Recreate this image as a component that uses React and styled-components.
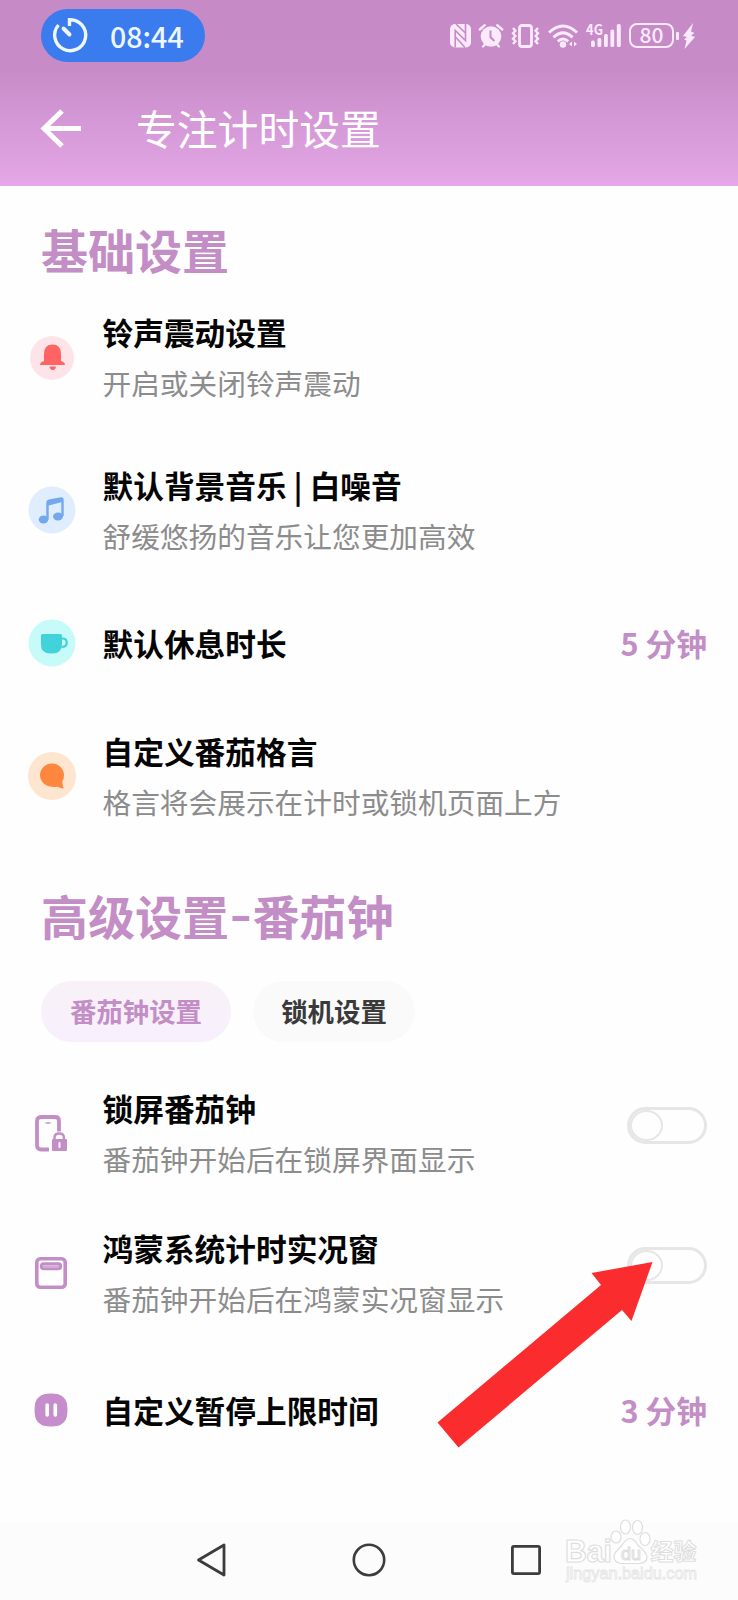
import React from 'react';
import styled, { createGlobalStyle } from 'styled-components';

const GlobalStyle = createGlobalStyle`
  * {
    box-sizing: border-box;
  }

  body {
    margin: 0;
    background: #fefefe;
    font-family: 'Noto Sans CJK SC', sans-serif;
  }

  svg {
    display: block;
    flex-shrink: 0;
    overflow: visible;
  }
`;

const Screen = styled.div`
  position: relative;
  display: flex;
  flex-direction: column;
  width: 738px;
  height: 1600px;
  overflow: hidden;
  background: #fefefe;
`;

const Header = styled.header`
  height: 186px;
  background: linear-gradient(#c68ac7 0, #c78bc8 68px, #d498d6 120px, #e4a7e7 186px);
  color: #fff;
`;

const StatusBar = styled.div`
  display: flex;
  align-items: center;
  justify-content: space-between;
  height: 71px;
  padding: 0 43px 0 41px;
`;

const TimerPill = styled.div`
  display: flex;
  align-items: center;
  gap: 22px;
  width: 164px;
  height: 53px;
  padding: 0 0 1px 11px;
  border-radius: 27px;
  background: #3a7bee;
  color: #eef6ff;
  font-size: 28.6px;
  font-weight: 500;
  line-height: 49px;
`;

const StatusIcons = styled.div`
  display: flex;
  align-items: center;
  gap: 8px;
  color: #fbeafc;
`;

const Battery = styled.div`
  display: flex;
  align-items: center;
  gap: 2px;
  width: 50px;

  &::after {
    content: '';
    width: 3px;
    height: 8px;
    border-radius: 1px;
    background: currentColor;
  }
`;

const BatteryLevel = styled.div`
  width: 45px;
  height: 25px;
  border: 2px solid currentColor;
  border-radius: 8px;
  font-size: 21px;
  font-weight: 500;
  line-height: 19px;
  text-align: center;
`;

const Bolt = styled.svg`
  margin-left: -4px;
`;

const TitleBar = styled.div`
  display: flex;
  align-items: center;
  gap: 54px;
  height: 115px;
  padding-left: 40px;
`;

const PageTitle = styled.h1`
  margin: 0;
  padding-bottom: 1px;
  font-size: 40.8px;
  font-weight: 400;
  line-height: 112px;
`;

const Content = styled.main`
  flex: 1;
`;

const SectionTitle = styled.h2`
  margin: ${({ $margin }) => $margin};
  font-size: 47px;
  font-weight: 700;
  line-height: 60px;
  color: #c38dc6;
`;

const Dash = styled.span`
  display: inline-block;
  padding: 0 3px;
  transform: translateY(-3px) scaleX(1.3);
`;

const List = styled.div`
  display: flex;
  flex-direction: column;
  gap: ${({ $gap }) => $gap}px;
`;

const Row = styled.div`
  display: flex;
  align-items: center;
  height: ${({ $height }) => $height || 101}px;
  padding-right: 31px;
`;

const IconSlot = styled.div`
  display: flex;
  justify-content: center;
  width: 102.5px;
  padding-left: ${({ $outline }) => ($outline ? 0 : 1)}px;
`;

const RowText = styled.div`
  flex: 1;
`;

const RowTitle = styled.div`
  font-size: 30.7px;
  font-weight: 700;
  line-height: 50px;
  color: #050505;
`;

const RowHint = styled.div`
  font-size: 28.7px;
  font-weight: 400;
  line-height: 51px;
  color: #8c8c8c;
`;

const RowValue = styled.div`
  font-size: 30.7px;
  font-weight: 700;
  line-height: 50px;
  color: #c38dc6;
`;

const Toggle = styled.div`
  display: flex;
  align-items: center;
  width: 80px;
  height: 37px;
  margin-bottom: 15px;
  border: 3px solid #e6e6e6;
  border-radius: 19px;
`;

const Thumb = styled.div`
  width: 33px;
  height: 31px;
  border: 2px solid #e6e6e6;
  border-radius: 50%;
`;

const Tabs = styled.div`
  display: flex;
  gap: 22px;
  margin: 36px 0 41px 41px;
`;

const Tab = styled.div`
  width: ${({ $width }) => $width}px;
  height: 61px;
  border-radius: 31px;
  background: ${({ $active }) => ($active ? 'linear-gradient(#f8f2f7, #f8effd)' : '#fafafa')};
  color: ${({ $active }) => ($active ? '#c38dc6' : '#3a3a3a')};
  font-size: 26.4px;
  font-weight: 700;
  line-height: 59px;
  text-align: center;
`;

const NavBar = styled.nav`
  display: flex;
  align-items: center;
  justify-content: space-between;
  height: 79px;
  padding: 0 196px 2px 195px;
  background: #fcfcfc;
`;

const Pointer = styled.svg`
  position: absolute;
  left: 430px;
  top: 1255px;
`;

const Watermark = styled.svg`
  position: absolute;
  left: 560px;
  top: 1515px;
`;

const TimerIcon = () => (
  <svg width="36" height="36" viewBox="0 0 36 36" fill="none" stroke="currentColor" strokeWidth="3.4">
    <path d="M17.500 9V2.700A15.500 15.500 0 1 1 6.500 8" />
    <path d="M11.500 11.500l6 6" strokeWidth="4" strokeLinecap="round" />
  </svg>
);

const NfcIcon = () => (
  <svg width="21" height="24" viewBox="0 0 21 24">
    <rect x="0" y="0" width="21" height="23.500" rx="5" fill="currentColor" />
    <path d="M5.200 23.500V6.500l10.300 10V0" fill="none" stroke="#c68ac7" strokeWidth="1.600" />
    <path d="M6 0l9.500 9M5.500 13l9.500 10.500" fill="none" stroke="#c68ac7" strokeWidth="1.600" />
  </svg>
);

const AlarmIcon = () => (
  <svg width="24" height="24" viewBox="0 0 24 24" fill="none" stroke="currentColor">
    <circle cx="12" cy="12.5" r="10.300" fill="currentColor" stroke="none" />
    <path d="M.8 5.500l5-4.300M23.200 5.500l-5-4.300M4 22.500l3-3M20 22.500l-3-3" strokeWidth="2.400" strokeLinecap="round" />
    <path d="M11.500 6.500v6.700l4 3.800" stroke="#c68ac7" strokeWidth="2" />
  </svg>
);

const VibrateIcon = () => (
  <svg width="29" height="24" viewBox="0 0 29 24" fill="none" stroke="currentColor">
    <rect x="8.5" y="1.5" width="12" height="21" rx="2.5" strokeWidth="2.8" />
    <path d="M2 4l2.4 2.7L2 9.3l2.4 2.7L2 14.7l2.4 2.6L2 20" strokeWidth="2.4" />
    <path d="M27 4l-2.4 2.7L27 9.3 24.6 12l2.4 2.7-2.4 2.6L27 20" strokeWidth="2.4" />
  </svg>
);

const WifiIcon = () => (
  <svg width="30" height="24" viewBox="0 0 30 24" fill="none" stroke="currentColor" strokeWidth="3">
    <path d="M1 8.500q14-13 28 0M5.500 13.300q9.500-9 19 0M9.800 17.300q5.200-4.600 10.400 0" />
    <circle cx="15" cy="20.500" r="3.200" fill="currentColor" stroke="none" />
    <path d="M24 17.500v5l-3-2.500zM26 17.500v5l3-2.500z" fill="currentColor" stroke="none" />
  </svg>
);

const SignalIcon = () => (
  <svg width="35" height="24" viewBox="0 0 35 24" fill="currentColor">
    <text x="0" y="11" fontSize="14.500" fontWeight="700" textLength="17" lengthAdjust="spacingAndGlyphs">4G</text>
    <rect x="5" y="16.500" width="3.800" height="6.500" rx="1.500" />
    <rect x="11.500" y="14" width="3.800" height="9" rx="1.500" />
    <rect x="18" y="10" width="3.800" height="13" rx="1.500" />
    <rect x="24.400" y="5.500" width="3.800" height="17.500" rx="1.500" />
    <rect x="30.800" y="0" width="4" height="23" rx="1.500" />
  </svg>
);

const BackArrow = () => (
  <svg width="42" height="40" viewBox="0 0 42 40" fill="none" stroke="#fff" strokeWidth="5">
    <path d="M41 19.500H5M22 2L4 19.500 22 37" />
  </svg>
);

const BellIcon = () => (
  <svg width="48" height="48" viewBox="0 0 48 48">
    <circle cx="24" cy="24" r="22" fill="#fee4e8" />
    <path d="M16 27V20q0-9.500 8.500-9.500T33 20v7q4 1 4 4H12q0-3 4-4z" fill="#ff6465" />
    <path d="M21.500 32.500H28q-.5 3.500-3.200 3.500t-3.300-3.500z" fill="#ff6465" />
  </svg>
);

const MusicIcon = () => (
  <svg width="48" height="48" viewBox="0 0 48 48">
    <circle cx="24" cy="24" r="23.500" fill="#e0edfe" />
    <path d="M19.500 33.500V16.500q0-1.500 1.500-1.800L33 12.500q1.500-.2 1.500 1.300V30" fill="none" stroke="#72a8ed" strokeWidth="2.400" />
    <path d="M20 15l14-2.500v3.500l-14 3.800z" fill="#72a8ed" />
    <ellipse cx="15.500" cy="33.500" rx="4.800" ry="4" fill="#72a8ed" />
    <ellipse cx="30" cy="30.500" rx="5" ry="4" fill="#72a8ed" />
  </svg>
);

const CupIcon = () => (
  <svg width="48" height="48" viewBox="0 0 48 48">
    <circle cx="24" cy="24" r="23.500" fill="#c6fbf9" />
    <path d="M14.500 15h18q1.500 0 1.500 1.500V25q0 9.500-9.500 9.500h-2Q13 34.500 13 26v-9.500q0-1.500 1.500-1.500z" fill="#42d2d9" />
    <path d="M33 19.500h1.500q4.300 0 4.300 4.200t-5.300 4.200" fill="none" stroke="#42d2d9" strokeWidth="2.200" />
  </svg>
);

const ChatIcon = () => (
  <svg width="48" height="48" viewBox="0 0 48 48">
    <circle cx="24" cy="24" r="24" fill="#fde5d0" />
    <path d="M24 11.500a12 11.700 0 0 1 12 11.700q0 4-1.800 6.300.3 3.500 1.500 7-3.500-.3-6-1.700-3 .2-5.700-.1a12 11.600 0 0 1 0-23.200z" fill="#ff863f" />
  </svg>
);

const PhoneLockIcon = () => (
  <svg width="34" height="38" viewBox="0 0 34 38" fill="none" stroke="#c38dc6">
    <path d="M15 35.500H7q-4 0-4-4V7q0-4 4-4h14q4 0 4 4v10.500" strokeWidth="3.800" />
    <path d="M11.500 9h5" strokeWidth="1.400" />
    <path d="M20.500 26v-2.500q0-4 4.700-4t4.700 4V26" strokeWidth="2.400" />
    <rect x="18" y="25" width="15" height="12" rx="1" fill="#c38dc6" stroke="none" />
    <path d="M25.500 29v4" stroke="#fff" strokeWidth="2" strokeLinecap="round" />
  </svg>
);

const WindowIcon = () => (
  <svg width="34" height="34" viewBox="0 0 34 34" fill="none" stroke="#c38dc6">
    <rect x="2.800" y="2.800" width="28.400" height="28.400" rx="3.500" strokeWidth="3.600" />
    <rect x="7.300" y="7.800" width="19.400" height="5" rx="2.500" strokeWidth="3" />
    <path d="M9 10.300h16" stroke="#d0addb" strokeWidth="2" />
  </svg>
);

const PauseIcon = () => (
  <svg width="34" height="34" viewBox="0 0 34 34">
    <path d="M17 .5Q33.500.5 33.500 17T17 33.500.5 17 17 .5z" fill="#c58dcb" />
    <rect x="1" y="1" width="32" height="32" rx="12" fill="#c58dcb" />
    <path d="M13.200 12v10M21.300 12v10" stroke="#fff" strokeWidth="3.600" strokeLinecap="round" />
  </svg>
);

const basicItems = [
  { icon: <BellIcon />, title: '铃声震动设置', hint: '开启或关闭铃声震动' },
  { icon: <MusicIcon />, title: '默认背景音乐 | 白噪音', hint: '舒缓悠扬的音乐让您更加高效' },
  { icon: <CupIcon />, title: '默认休息时长', value: '5 分钟', height: 62 },
  { icon: <ChatIcon />, title: '自定义番茄格言', hint: '格言将会展示在计时或锁机页面上方' },
];

const advancedItems = [
  { icon: <PhoneLockIcon />, title: '锁屏番茄钟', hint: '番茄钟开始后在锁屏界面显示', toggle: true },
  { icon: <WindowIcon />, title: '鸿蒙系统计时实况窗', hint: '番茄钟开始后在鸿蒙实况窗显示', toggle: true },
  { icon: <PauseIcon />, title: '自定义暂停上限时间', value: '3 分钟', height: 94 },
];

const SettingRow = ({ item, outline }) => (
  <Row $height={item.height}>
    <IconSlot $outline={outline}>{item.icon}</IconSlot>
    <RowText>
      <RowTitle>{item.title}</RowTitle>
      {item.hint && <RowHint>{item.hint}</RowHint>}
    </RowText>
    {item.value && <RowValue>{item.value}</RowValue>}
    {item.toggle && (
      <Toggle>
        <Thumb />
      </Toggle>
    )}
  </Row>
);

const App = () => {
  return (
    <Screen>
      <GlobalStyle />
      <Header>
        <StatusBar>
          <TimerPill>
            <TimerIcon />
            08:44
          </TimerPill>
          <StatusIcons>
            <NfcIcon />
            <AlarmIcon />
            <VibrateIcon />
            <WifiIcon />
            <SignalIcon />
            <Battery>
              <BatteryLevel>80</BatteryLevel>
            </Battery>
            <Bolt width="12" height="26" viewBox="0 0 12 26" fill="currentColor">
              <path d="M10 0L0 13l4 1-3 2.500 2.500 1L1.500 26 12 14l-4-1.500L11.500 10 8 8.500z" />
            </Bolt>
          </StatusIcons>
        </StatusBar>
        <TitleBar>
          <BackArrow />
          <PageTitle>专注计时设置</PageTitle>
        </TitleBar>
      </Header>

      <Content>
        <SectionTitle $margin="33px 0 28px 41px">基础设置</SectionTitle>
        <List $gap={51.6}>
          {basicItems.map((item) => (
            <SettingRow key={item.title} item={item} />
          ))}
        </List>

        <SectionTitle $margin="58px 0 0 41px">
          高级设置<Dash>-</Dash>番茄钟
        </SectionTitle>
        <Tabs>
          <Tab $active $width={190}>番茄钟设置</Tab>
          <Tab $width={162}>锁机设置</Tab>
        </Tabs>
        <List $gap={39}>
          {advancedItems.map((item) => (
            <SettingRow key={item.title} item={item} outline />
          ))}
        </List>
      </Content>

      <NavBar>
        <svg width="32" height="36" viewBox="0 0 32 36" fill="none" stroke="#3c3c3c" strokeWidth="2.800" strokeLinejoin="round">
          <path d="M29 3v30L3.500 18z" />
        </svg>
        <svg width="36" height="36" viewBox="0 0 36 36" fill="none" stroke="#3c3c3c" strokeWidth="2.600">
          <circle cx="18" cy="18" r="15.200" />
        </svg>
        <svg width="32" height="32" viewBox="0 0 32 32" fill="none" stroke="#3c3c3c" strokeWidth="2.800">
          <rect x="2.400" y="2.400" width="27.200" height="27.200" rx="1.500" />
        </svg>
      </NavBar>

      <Pointer width="230" height="200" viewBox="0 0 230 200" fill="#fb2c2d">
        <path d="M7.500 167.500L171 30 161.500 18 222.500 7 201.500 66 192 55 28.500 192.500z" />
      </Pointer>

      <Watermark width="150" height="75" viewBox="0 0 150 75" fill="#fff" stroke="#dedede" strokeWidth="1.200">
        <text x="5" y="46.500" fontFamily="Liberation Sans" fontSize="31" fontWeight="700" textLength="47" lengthAdjust="spacingAndGlyphs">Bai</text>
        <ellipse cx="56" cy="22" rx="5" ry="6" />
        <ellipse cx="65.500" cy="12" rx="5" ry="7" />
        <ellipse cx="77.500" cy="12.500" rx="5" ry="7" />
        <ellipse cx="85" cy="24" rx="5" ry="6.500" />
        <path d="M70 23.500q4 0 8 7 9 7 9 11.500 0 6-8 6.500H61q-7-1-7-7 0-4 8-11 4-7 8-7z" />
        <text x="61" y="45" fontFamily="Liberation Sans" fontSize="19" textLength="20" lengthAdjust="spacingAndGlyphs">du</text>
        <text x="90.500" y="45" fontSize="23" fontWeight="700" strokeWidth="1" textLength="46" lengthAdjust="spacingAndGlyphs">经验</text>
        <text x="6" y="64" fontFamily="Liberation Sans" fontSize="16.500" stroke="#e4e4e4" strokeWidth=".8" textLength="131" lengthAdjust="spacingAndGlyphs">jingyan.baidu.com</text>
      </Watermark>
    </Screen>
  );
};

export default App;
